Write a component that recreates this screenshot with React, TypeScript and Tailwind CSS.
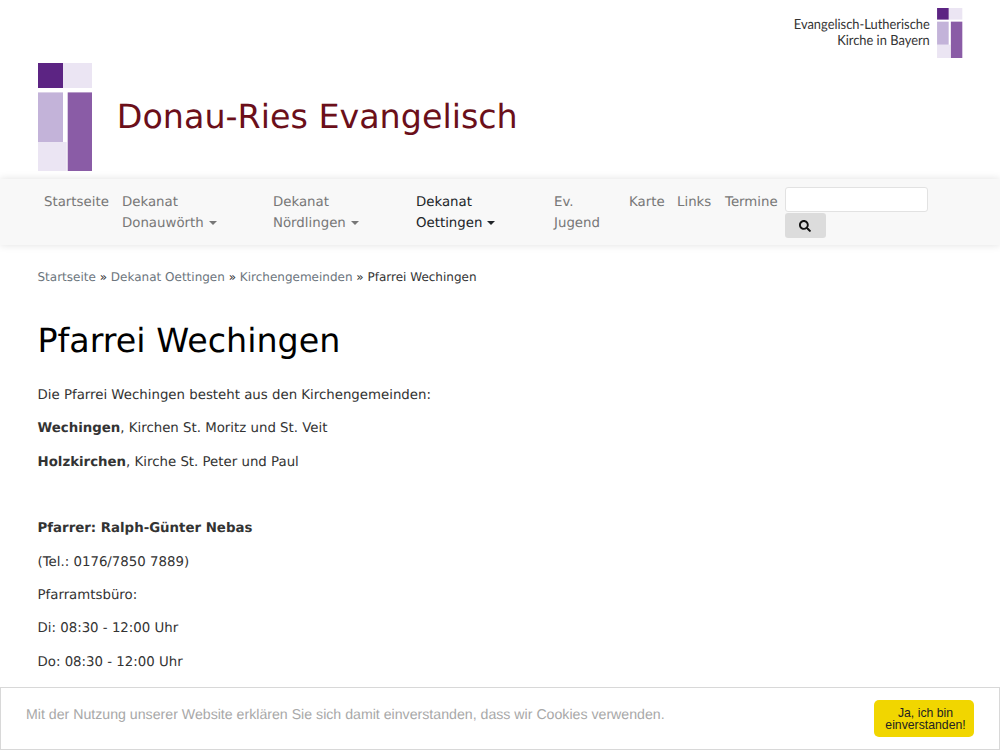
import { FaSearch } from "react-icons/fa";

function Mark({ className }: { className: string }) {
  return (
    <svg viewBox="0 0 54.4 108.4" className={className}>
      <rect x="25" y="0" width="29.4" height="25" fill="#ebe5f3" />
      <rect x="0" y="79" width="28.7" height="29.4" fill="#ebe5f3" />
      <rect x="0" y="0" width="25" height="25" fill="#5c2483" />
      <rect x="0" y="29.4" width="25" height="49.6" fill="#c3b3d9" />
      <rect x="29.7" y="29.4" width="24.7" height="79" fill="#8a5ca6" />
    </svg>
  );
}

function Caret() {
  return (
    <span className="inline-block ml-[5px] align-[2px] border-t-[4px] border-x-[4px] border-x-transparent border-t-current" />
  );
}

function NavItem({
  children,
  width,
  active,
}: {
  children: React.ReactNode;
  width: string;
  active?: boolean;
}) {
  return (
    <a className={`block px-[7px] shrink-0 ${width} ${active ? "text-[#212529]" : "text-[#777]"}`}>
      {children}
    </a>
  );
}

export default function App() {
  return (
    <div className="relative h-[750px] overflow-hidden bg-white text-[13.33px] leading-[20px] text-[#333] font-['DejaVu_Sans',sans-serif] [text-rendering:geometricPrecision]">
      <div className="flex justify-end items-start pt-2 pr-[37.3px]">
        <div className="mr-2 mt-[8px] origin-right scale-x-[0.92] text-right font-['Lato',sans-serif] text-[14px] leading-[16px] text-[#333]">
          Evangelisch-Lutherische
          <br />
          Kirche in Bayern
        </div>
        <Mark className="w-[25.4px] h-[50.3px]" />
      </div>

      <div className="flex items-center pl-[37.5px] mt-[4px] h-[109px]">
        <Mark className="w-[54.4px] h-[108.4px]" />
        <div className="ml-[24.9px] text-[33.33px] leading-[40px] text-[#6b0f1a]">Donau-Ries Evangelisch</div>
      </div>

      <nav className="mt-[8px] h-[66px] bg-[#f8f8f8] shadow-[0_0_8px_rgba(0,0,0,0.12)] flex items-start pl-[37px] pt-[14px] leading-[20.5px]">
        <NavItem width="w-[78px]">Startseite</NavItem>
        <NavItem width="w-[151px]">
          Dekanat
          <br />
          Donauwörth
          <Caret />
        </NavItem>
        <NavItem width="w-[143px]">
          Dekanat
          <br />
          Nördlingen
          <Caret />
        </NavItem>
        <NavItem width="w-[138px]" active>
          Dekanat
          <br />
          Oettingen
          <Caret />
        </NavItem>
        <NavItem width="w-[75px]">
          Ev.
          <br />
          Jugend
        </NavItem>
        <NavItem width="w-[48px]">Karte</NavItem>
        <NavItem width="w-[48px]">Links</NavItem>
        <NavItem width="w-[67px]">Termine</NavItem>
        <div className="-mt-[6px] flex flex-col items-start">
          <input className="w-[143px] h-[25px] bg-white border border-[#e2e2e2] rounded-[3px]" />
          <button className="mt-px w-[41px] h-[25px] bg-[#dcdcdc] rounded-[3px] flex items-center justify-center pr-[2px] text-[#111]">
            <FaSearch className="w-[12px] h-[12px]" />
          </button>
        </div>
      </nav>

      <main className="pl-[37.5px] pr-[37px]">
        <div className="mt-[22px] text-[12px] leading-[21px]">
          <a className="text-[#6c757d]">Startseite</a> » <a className="text-[#6c757d]">Dekanat Oettingen</a> »{" "}
          <a className="text-[#6c757d]">Kirchengemeinden</a> » Pfarrei Wechingen
        </div>
        <h1 className="mt-[33px] text-[33.33px] leading-[40px] text-black">Pfarrei Wechingen</h1>
        <div className="mt-[24.6px] flex flex-col gap-[13.33px]">
          <p>Die Pfarrei Wechingen besteht aus den Kirchengemeinden:</p>
          <p>
            <strong>Wechingen</strong>, Kirchen St. Moritz und St. Veit
          </p>
          <p>
            <strong>Holzkirchen</strong>, Kirche St. Peter und Paul
          </p>
          <p>&nbsp;</p>
          <p>
            <strong>Pfarrer: Ralph-Günter Nebas</strong>
          </p>
          <p>(Tel.: 0176/7850 7889)</p>
          <p>Pfarramtsbüro:</p>
          <p>Di: 08:30 - 12:00 Uhr</p>
          <p>Do: 08:30 - 12:00 Uhr</p>
        </div>
      </main>

      <div className="absolute bottom-0 inset-x-0 h-[63px] bg-white border border-[#d8d8d8] flex items-start justify-between pl-[25px] pr-[25px] pt-[12px] font-['Liberation_Sans',sans-serif] text-[14.17px] leading-[28px] text-[#a8a8a8]">
        <span className="mt-px">Mit der Nutzung unserer Website erklären Sie sich damit einverstanden, dass wir Cookies verwenden.</span>
        <button className="w-[100px] h-[37px] pt-[2px] pl-[3px] bg-[#f1d600] rounded-[5px] text-[12.25px] leading-[11.5px] text-[#222] text-center">
          Ja, ich bin einverstanden!
        </button>
      </div>
    </div>
  );
}
